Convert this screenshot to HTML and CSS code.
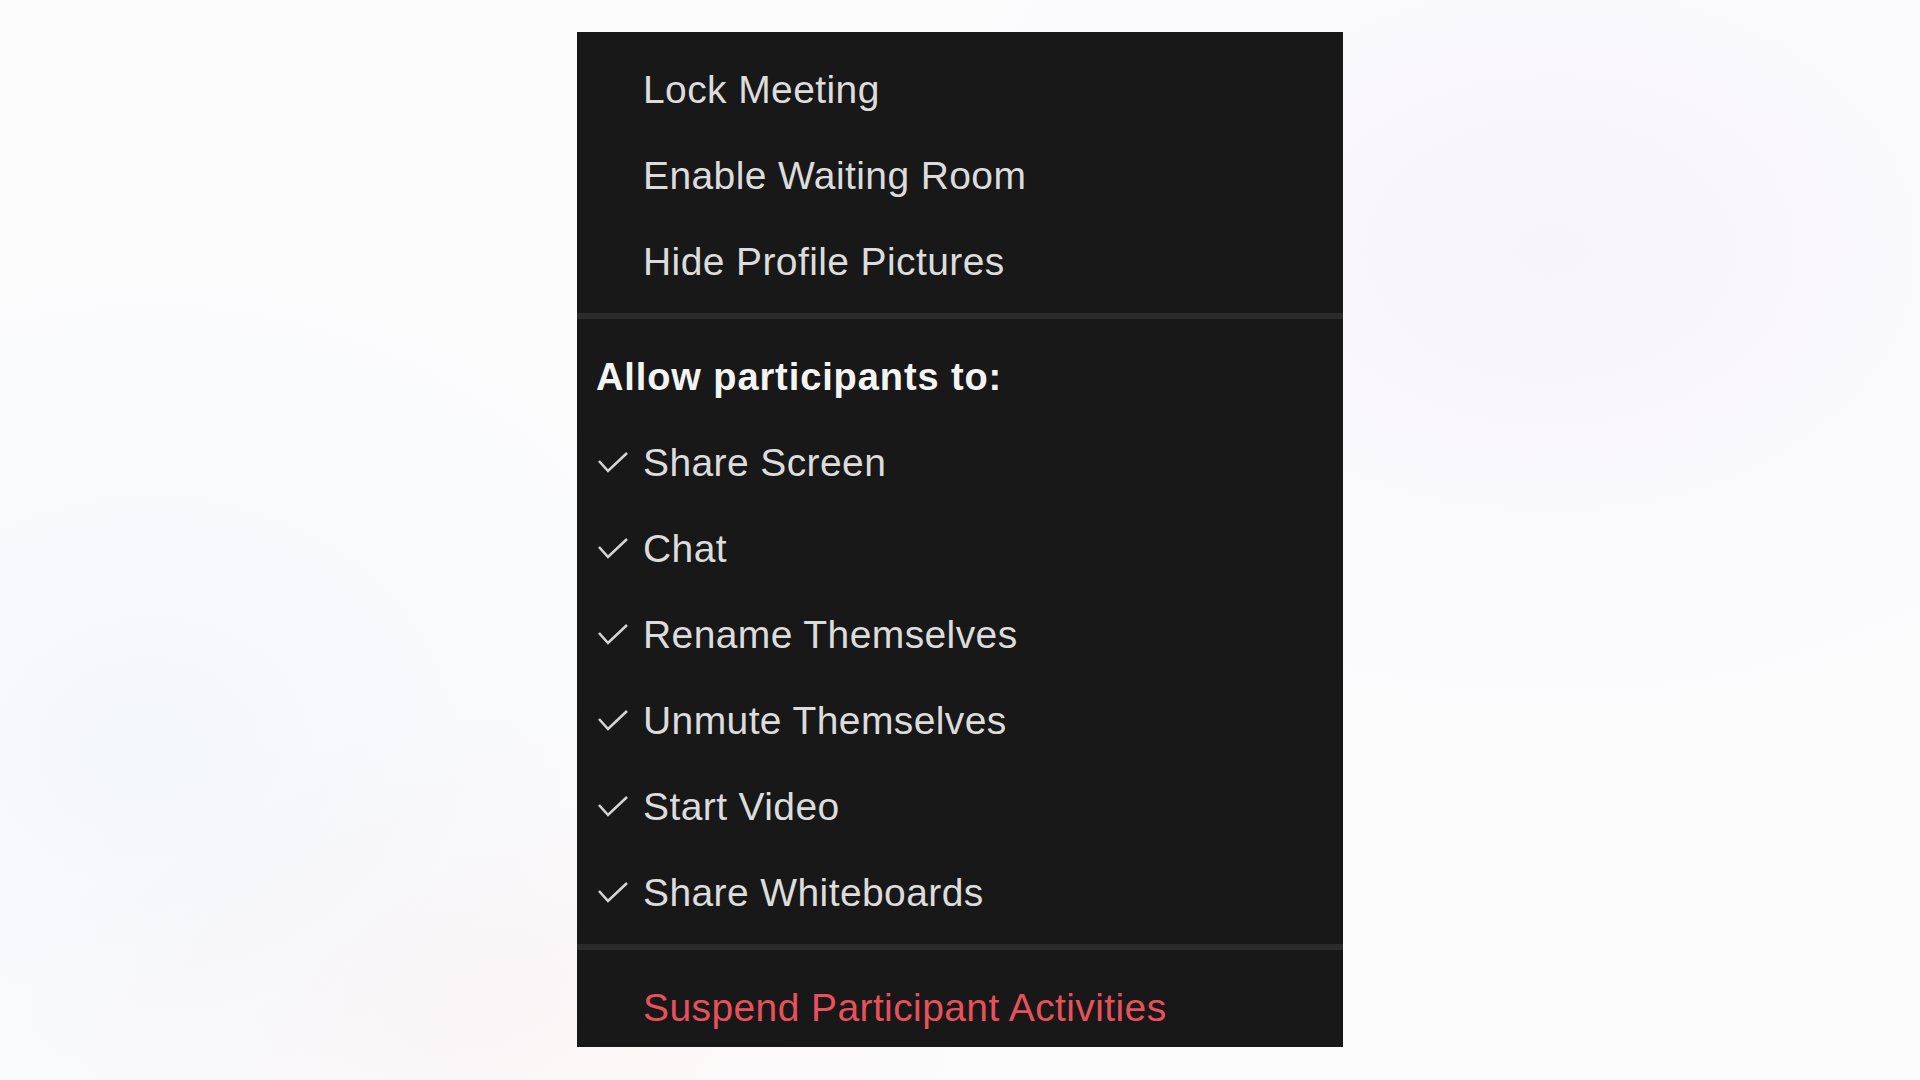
FILE: index.html
```html
<!DOCTYPE html>
<html>

<head>
    <meta charset="utf-8">
    <title>Participant Options</title>
    <link rel="stylesheet" href="styles.css">
</head>

<body>
    <div class="menu">
        <ul class="group">
            <li class="item"><span class="mark"></span>Lock Meeting</li>
            <li class="item"><span class="mark"></span>Enable Waiting Room</li>
            <li class="item"><span class="mark"></span>Hide Profile Pictures</li>
        </ul>

        <div class="divider"></div>

        <!-- Permissions -->
        <ul class="group perms">
            <li class="heading">Allow participants to:</li>
            <li class="item"><span class="mark"><svg class="check" viewBox="0 0 30 22"><path d="M1 10 L10 20 L29 2" /></svg></span>Share Screen</li>
            <li class="item"><span class="mark"><svg class="check" viewBox="0 0 30 22"><path d="M1 10 L10 20 L29 2" /></svg></span>Chat</li>
            <li class="item"><span class="mark"><svg class="check" viewBox="0 0 30 22"><path d="M1 10 L10 20 L29 2" /></svg></span>Rename Themselves</li>
            <li class="item"><span class="mark"><svg class="check" viewBox="0 0 30 22"><path d="M1 10 L10 20 L29 2" /></svg></span>Unmute Themselves</li>
            <li class="item"><span class="mark"><svg class="check" viewBox="0 0 30 22"><path d="M1 10 L10 20 L29 2" /></svg></span>Start Video</li>
            <li class="item"><span class="mark"><svg class="check" viewBox="0 0 30 22"><path d="M1 10 L10 20 L29 2" /></svg></span>Share Whiteboards</li>
        </ul>

        <div class="divider"></div>

        <ul class="group last">
            <li class="item danger"><span class="mark"></span>Suspend Participant Activities</li>
        </ul>
    </div>
</body>

</html>
```

FILE: styles.css
```css
body {
    margin: 0;
    padding: 0;
    height: 1080px;
    overflow: hidden;
    font-family: "Liberation Sans", Arial, sans-serif;
    background-color: #fcfcfd;
    background-image:
        radial-gradient(ellipse 700px 500px at 1550px 250px, rgba(246, 243, 250, 0.8), rgba(246, 243, 250, 0)),
        radial-gradient(ellipse 600px 500px at 150px 750px, rgba(241, 245, 250, 0.7), rgba(241, 245, 250, 0)),
        radial-gradient(ellipse 500px 300px at 500px 1000px, rgba(252, 244, 244, 0.8), rgba(252, 244, 244, 0));
}

.menu {
    width: 766px;
    height: 1000px;
    margin: 32px auto 0;
    padding-top: 15px;
    background-color: #181818;
    overflow: hidden;
}

ul {
    list-style-type: none;
    margin: 0;
    padding: 0;
}

.group {
    padding-bottom: 8px;
}

.perms {
    padding-top: 15px;
    padding-bottom: 8px;
}

.last {
    padding-top: 15px;
}

.item {
    display: flex;
    align-items: center;
    height: 86px;
    line-height: 86px;
    font-size: 39px;
    letter-spacing: 0.4px;
    color: #dcdcdc;
    white-space: nowrap;
}

.mark {
    display: flex;
    align-items: center;
    width: 66px;
    height: 86px;
    flex-shrink: 0;
}

.check {
    width: 30px;
    height: 22px;
    margin-left: 21px;
    margin-top: -2px;
}

.check path {
    fill: none;
    stroke: #d4d4d4;
    stroke-width: 2.6;
}

.heading {
    height: 86px;
    line-height: 86px;
    padding-left: 19px;
    font-size: 38px;
    font-weight: bold;
    letter-spacing: 0.9px;
    color: #f4f4f4;
    white-space: nowrap;
}

.danger {
    color: #e8515c;
}

.divider {
    height: 6px;
    background-color: #2b2b2b;
}
```
